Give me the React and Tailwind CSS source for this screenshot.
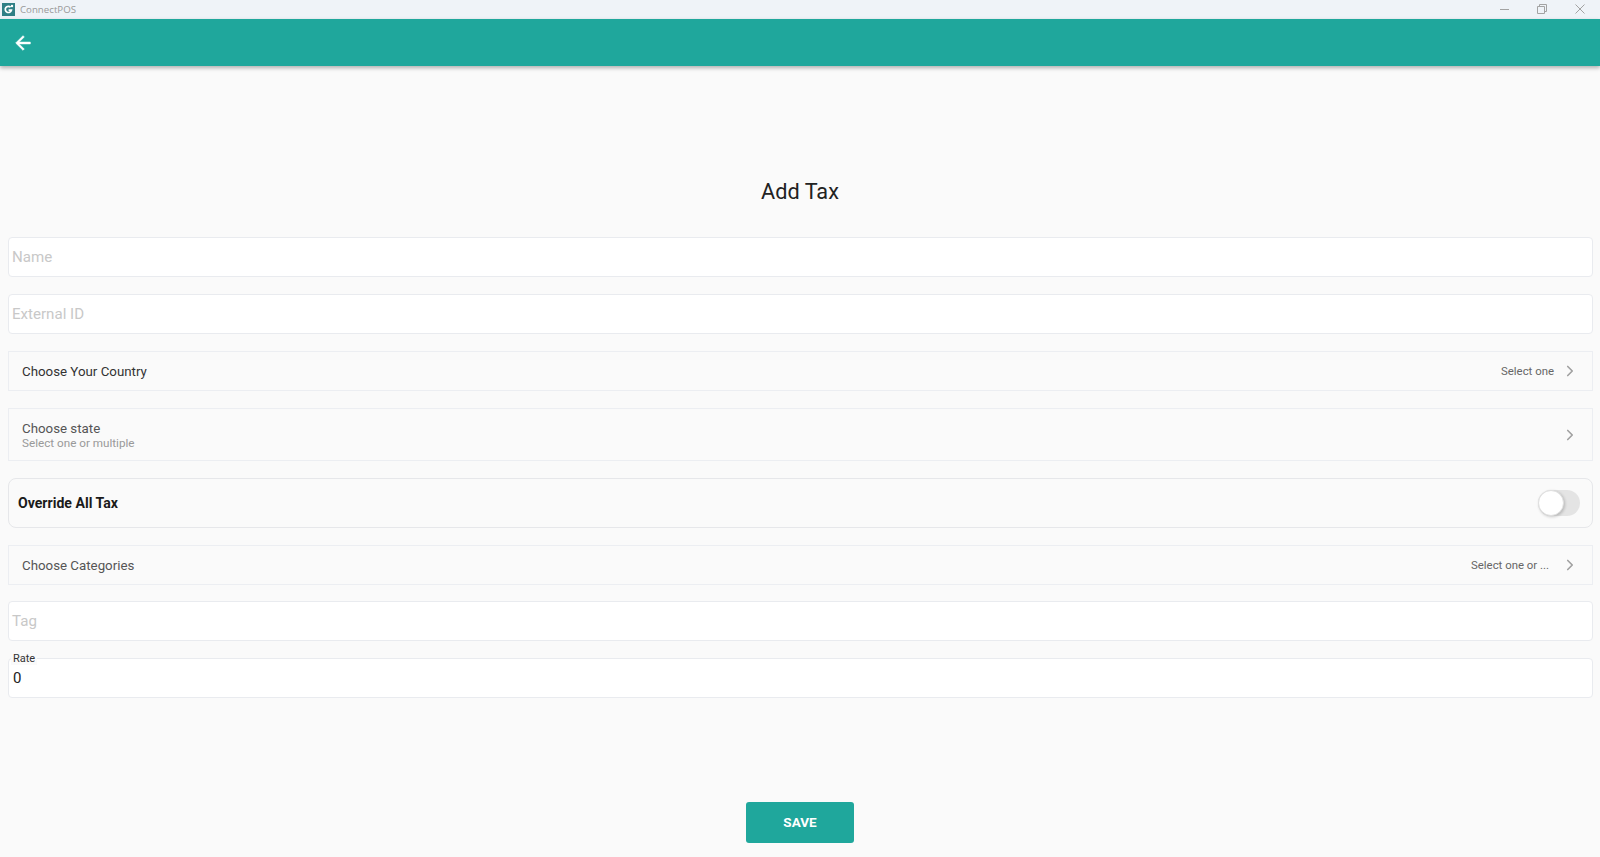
import React from "react";
import { ChevronRight } from "lucide-react";

const font = { fontFamily: "Roboto, sans-serif" };

function TextField({ placeholder }) {
  return (
    <div className="h-[40px] mb-[17px] bg-white border border-[#e9ebef] rounded-[4px] flex items-center pl-[3px] text-[15.1px] text-[#c8c8c8]">
      {placeholder}
    </div>
  );
}

function SelectRow({ label, sub, value, heightClass = "h-[40px]", marginClass = "mb-[17px]", labelClass = "text-[#555555]", valueGap = "mr-[7px]" }) {
  return (
    <div className={`${heightClass} ${marginClass} border border-[#eceef2] flex items-center pl-[13px] pr-[13px] text-[13.3px]`}>
      <div className="flex-1 flex flex-col pt-[1px]">
        <span className={`leading-[16px] ${labelClass}`}>{label}</span>
        {sub && <span className="text-[11.7px] leading-[13px] text-[#999999]">{sub}</span>}
      </div>
      {value && <span className={`text-[11.4px] text-[#666666] pt-[1px] ${valueGap}`}>{value}</span>}
      <ChevronRight size={18} strokeWidth={2.2} className="text-[#a0a0a0]" />
    </div>
  );
}

export default function App() {
  return (
    <div style={font} className="h-[857px] w-[1600px] overflow-hidden bg-[#fafafa] flex flex-col">
      <div className="h-[19px] bg-[#eff3f8] flex items-center pl-[2px]">
        <svg width="13" height="13" viewBox="0 0 13 13">
          <rect width="13" height="13" fill="#2f7f86" />
          <path d="M8.6 4.2A3.1 3.1 0 1 0 9.4 7.2H6.6" fill="none" stroke="#fff" strokeWidth="1.7" />
          <circle cx="10" cy="3" r="1.2" fill="#fff" />
        </svg>
        <span className="ml-[5px] pt-[1px] text-[9.7px] text-[#999999]" style={{ fontFamily: "'Open Sans', sans-serif" }}>ConnectPOS</span>
        <div className="ml-auto flex items-center pb-[2px]">
          <svg width="10" height="10" viewBox="0 0 10 10" className="mr-[27px]">
            <path d="M0 5.5H9" stroke="#a3a3a3" strokeWidth="1" />
          </svg>
          <svg width="10" height="10" viewBox="0 0 10 10" className="mr-[28px]">
            <path d="M.5 2.5H7.5V9.5H.5ZM2.5 2.5V.5H9.5V7.5H7.5" fill="none" stroke="#a3a3a3" strokeWidth="1" />
          </svg>
          <svg width="10" height="10" viewBox="0 0 10 10" className="mr-[15px]">
            <path d="M.5.5L9.5 9.5M9.5.5L.5 9.5" stroke="#a3a3a3" strokeWidth="1" />
          </svg>
        </div>
      </div>
      <div className="relative z-10 h-[47px] bg-[#1fa79c] shadow-[0_2px_4px_rgba(0,0,0,0.3)] flex items-center pl-[12px]">
        <svg width="22" height="22" viewBox="0 0 24 24" fill="#ffffff" stroke="#ffffff" strokeWidth="0.6">
          <path d="M20 11H7.83l5.59-5.59L12 4l-8 8 8 8 1.41-1.41L7.83 13H20v-2z" />
        </svg>
      </div>
      <div className="flex-1 px-[8px] flex flex-col">
        <h1 className="h-[171px] flex items-end justify-center pb-[31px] text-[21.7px] leading-[28px] font-normal text-[#222222]">Add Tax</h1>
        <div className="-mr-[1px]">
          <TextField placeholder="Name" />
          <TextField placeholder="External ID" />
          <SelectRow label="Choose Your Country" labelClass="text-[#333333]" value="Select one" />
          <SelectRow label="Choose state" sub="Select one or multiple" heightClass="h-[53px]" />
          <div className="h-[50px] mb-[17px] border border-[#e6e7ea] rounded-[8px] flex items-center pl-[8px] pr-[12px]">
            <span className="flex-1 pl-[1px] pt-[1px] text-[14.1px] font-bold text-[#1a1a1a]">Override All Tax</span>
            <div className="w-[42px] h-[26px] rounded-full bg-[#e4e4e4] relative">
              <div className="absolute left-0 top-0 w-[26px] h-[26px] rounded-full bg-white border border-[#e0e0e0] shadow-[1px_1px_3px_rgba(0,0,0,0.2)]" />
            </div>
          </div>
          <SelectRow label="Choose Categories" value="Select one or ..." marginClass="mb-[16px]" valueGap="mr-[12px]" />
          <TextField placeholder="Tag" />
          <div className="relative h-[40px] bg-white border border-[#e9ebef] rounded-[4px] flex items-center pl-[4px] pt-[1px] text-[15px] text-[#222222]">
            0
            <span className="absolute left-[2px] top-[-7px] px-[2px] bg-[#fafafa] text-[11px] leading-[13px] text-[#333333]">Rate</span>
          </div>
        </div>
        <div className="flex justify-center mt-[104px]">
          <button className="w-[108px] h-[41px] bg-[#1fa79c] rounded-[3px] text-white text-[13.5px] font-bold">SAVE</button>
        </div>
      </div>
    </div>
  );
}
